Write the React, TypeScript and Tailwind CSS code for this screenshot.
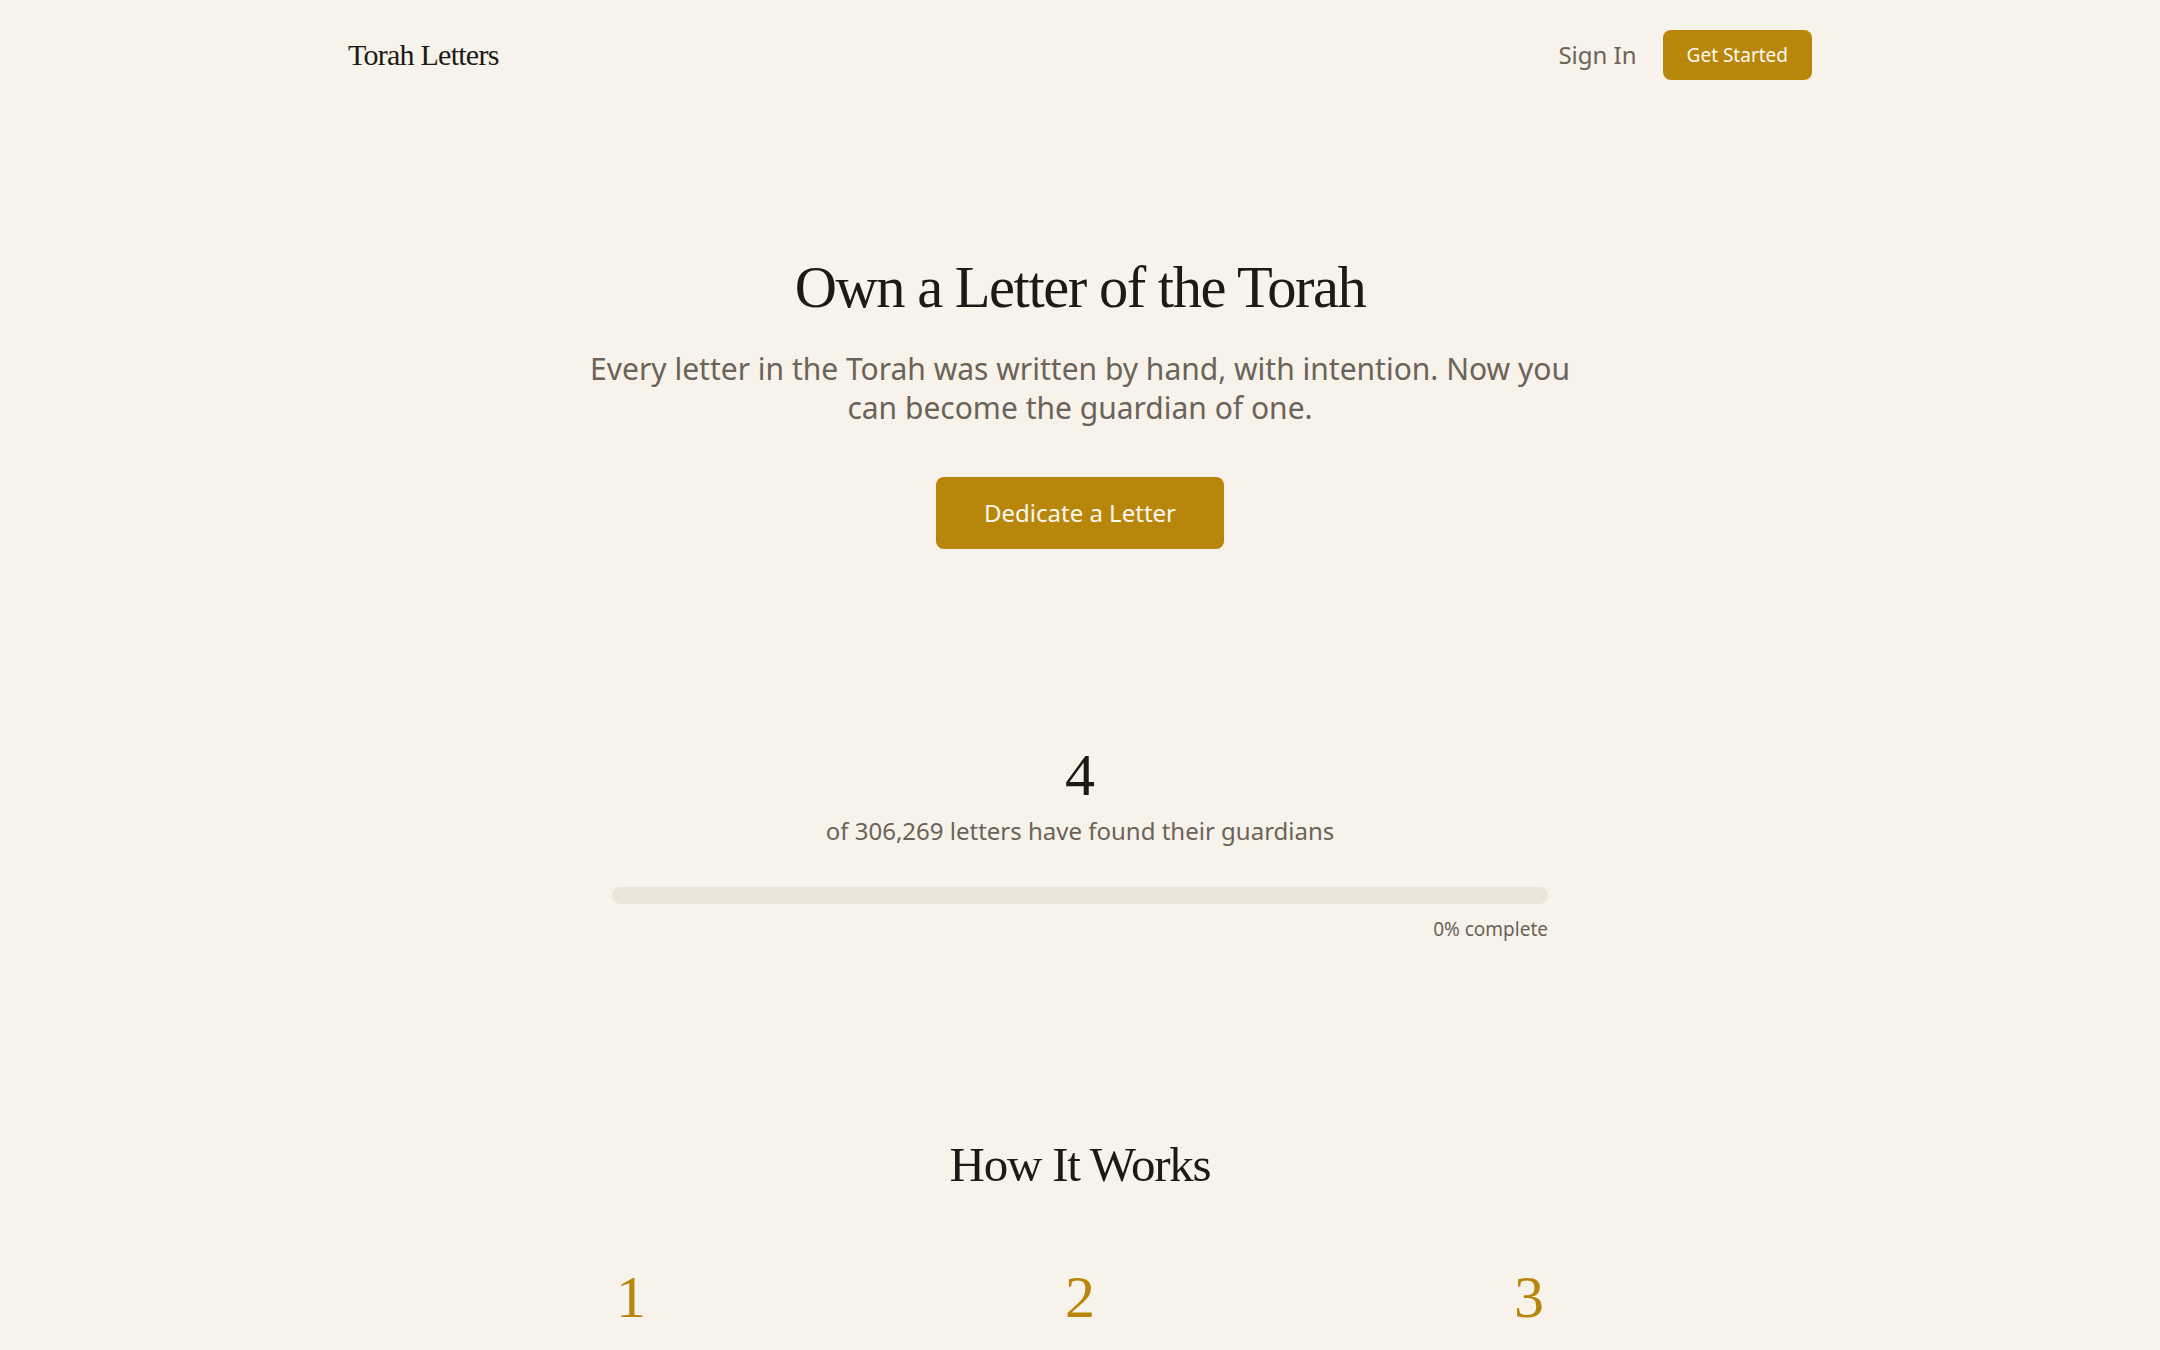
import React from "react";

const serif = "font-['Liberation_Serif','Times_New_Roman',serif]";
const sans = "font-['Noto_Sans','Open_Sans',sans-serif]";

const TOTAL_LETTERS = 306269;
const dedicated = 4;

const steps = [1, 2, 3];

export default function App() {
  const percent = Math.floor((dedicated / TOTAL_LETTERS) * 100);

  return (
    <div className={`min-h-screen bg-[#f7f2ea] text-[#1c1a17] ${sans}`}>
      {/* Top nav */}
      <header className="mx-auto flex h-[110px] w-[1464px] items-center justify-between">
        <a href="#" className={`${serif} text-3xl tracking-tight text-[#1c1a17]`}>
          Torah Letters
        </a>
        <nav className="flex items-center gap-[26px]">
          <a href="#" className="text-2xl text-[#6b6359]">
            Sign In
          </a>
          <button className="rounded-lg bg-[#b8860b] px-6 py-3 text-[19px] leading-[26px] text-[#fdf8ee]">
            Get Started
          </button>
        </nav>
      </header>

      {/* Hero */}
      <section className="flex flex-col items-center pt-[142px] text-center">
        <h1 className={`${serif} text-[58.5px] leading-[72px] tracking-tight text-[#1c1a17]`}>
          Own a Letter of the Torah
        </h1>
        <p className="mt-[26px] max-w-5xl text-3xl leading-[38.5px] text-[#6b6359]">
          Every letter in the Torah was written by hand, with intention. Now you
          can become the guardian of one.
        </p>
        <button className="mt-[50px] rounded-lg bg-[#b8860b] px-12 py-5 text-2xl leading-8 text-[#fdf8ee]">
          Dedicate a Letter
        </button>
      </section>

      {/* Progress */}
      <section className="mx-auto mt-[196px] flex w-[936px] flex-col items-center">
        <div className={`${serif} text-6xl leading-none text-[#1c1a17]`}>{dedicated}</div>
        <p className="mt-[10px] text-2xl leading-8 text-[#6b6359]">
          of {TOTAL_LETTERS.toLocaleString("en-US")} letters have found their guardians
        </p>
        <div className="mt-10 h-[17px] w-full overflow-hidden rounded-full bg-[#ebe4d8]">
          <div className="h-full rounded-full bg-[#b8860b]" style={{ width: `${percent}%` }} />
        </div>
        <p className="mt-3 self-end text-[19px] leading-[26px] text-[#6b6359]">{percent}% complete</p>
      </section>

      {/* How it works */}
      <section className="mx-auto mt-[193px] w-[936px] pb-40">
        <h2 className={`${serif} text-center text-[49px] leading-[60px] tracking-tight text-[#1c1a17]`}>
          How It Works
        </h2>
        <div className="mt-[72px] flex justify-between px-1">
          {steps.map((n) => (
            <div key={n} className={`${serif} text-6xl leading-none text-[#b8860b]`}>
              {n}
            </div>
          ))}
        </div>
      </section>
    </div>
  );
}
